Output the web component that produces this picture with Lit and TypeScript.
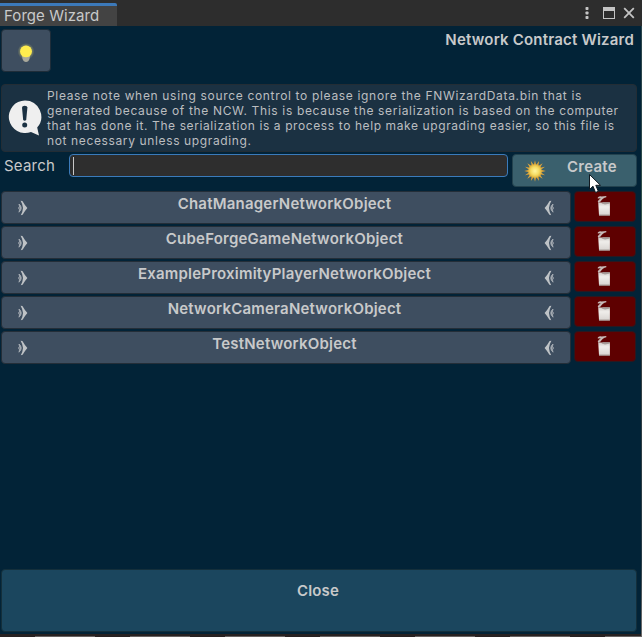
import { LitElement, html, css, svg } from "lit";
import { customElement, property } from "lit/decorators.js";

@customElement("wave-icon")
class WaveIcon extends LitElement {
  static styles = css`:host { display: block; width: 10px; height: 16px; } svg { display: block; }`;
  render() {
    return html`<svg width="10" height="16" viewBox="0 0 10 16">
      <path d="M2.600 .8 L4.400 1 Q6.600 5 9.400 7.900 Q6.600 11 4.600 14.800 L2.800 15.200 Q4.800 11.500 5 8 Q4.800 4.500 2.600 .8Z" fill="#bfc3c6"/>
      <path d="M1 4 Q5.400 8 1 12.200 Q3 8 1 4Z" fill="#a4abb2" stroke="#a4abb2" stroke-width="1"/>
      <path d="M0 6.800 L1.400 8 L0 9.500Z" fill="#9299a2"/>
    </svg>`;
  }
}

@customElement("contract-row")
class ContractRow extends LitElement {
  @property() name = "";
  static styles = css`
    :host { display: flex; gap: 3px; height: 33px; align-items: flex-start; }
    .main { box-sizing: border-box; width: 570px; height: 33px; border: 1px solid #242e38; border-radius: 4px;
      background: #3e4e60; display: grid; grid-template-columns: 10px 1fr 10px; padding: 0 16px; }
    .label { text-align: center; font: 600 15px/24px Inter, sans-serif; letter-spacing: .21px; padding-right: 3px; color: #c8c9ca; white-space: nowrap; }
    wave-icon { margin-top: 8px; }
    .right { transform: scaleX(-1); }
    .del { box-sizing: border-box; width: 62px; height: 31px; border: 1px solid #2a1820; border-radius: 4px;
      background: #5e0000; display: flex; justify-content: center; padding: 3px 3px 0 0; }
  `;
  render() {
    return html`
      <div class="main"><wave-icon></wave-icon><span class="label">${this.name}</span><wave-icon class="right"></wave-icon></div>
      <div class="del"><svg width="14" height="22" viewBox="0 0 14 22">
        <defs><linearGradient id="can" x1="0" x2="0" y1="0" y2="1"><stop offset="0" stop-color="#cfcac7"/><stop offset=".35" stop-color="#efedea"/><stop offset="1" stop-color="#d8d4d1"/></linearGradient></defs>
        <path d="M.8 2.400 Q2 1.200 4.500 1.400 L9.300 1.100 V2.300 Q5.500 3 3.600 6.500 L1.400 7.500 L.7 6.300 Q2.200 4.500 3.800 3.300 L.8 3.500Z" fill="#c6b9b7"/>
        <path d="M1.200 7.200 L4 7.600 H12.900 V20.300 H2Z" fill="url(#can)"/>
        <path d="M4.500 8.600 L8 9.600 L12.900 8.600 V7.200 H6Z" fill="#a59b98"/>
        <path d="M2 19.600 H12.900 V20.800 H2Z" fill="#a0938f"/>
      </svg></div>`;
  }
}

const ROWS = [
  "ChatManagerNetworkObject",
  "CubeForgeGameNetworkObject",
  "ExampleProximityPlayerNetworkObject",
  "NetworkCameraNetworkObject",
  "TestNetworkObject",
];

const NOTE = [
  { text: "Please note when using source control to please ignore the FNWizardData.bin that is", tracking: 0.67 },
  { text: "generated because of the NCW. This is because the serialization is based on the computer", tracking: 0.66 },
  { text: "that has done it. The serialization is a process to help make upgrading easier, so this file is", tracking: 0.6 },
  { text: "not necessary unless upgrading.", tracking: 0.63 },
];

const sunPoints = (outer: number, inner: number) =>
  Array.from({ length: 32 }, (_, i) => {
    const r = i % 2 ? inner : outer;
    const a = (i * Math.PI) / 16 - Math.PI / 2;
    return `${(11 + r * Math.cos(a)).toFixed(2)},${(11 + r * Math.sin(a)).toFixed(2)}`;
  }).join(" ");

@customElement("app-root")
class AppRoot extends LitElement {
  static styles = css`
    :host { display: flex; flex-direction: column; position: relative; width: 642px; height: 637px; box-sizing: border-box;
      overflow: hidden; background: #022337; color: #c8c9ca; font-family: Inter, sans-serif; }
    svg { display: block; }
    .bar { height: 26px; background: #2d2d2d; display: flex; justify-content: space-between; flex: none; }
    .tab { box-sizing: border-box; margin-top: 3px; width: 117px; height: 23px; background: #434343; border-top: 3px solid #3c79b9;
      border-top-right-radius: 2px; padding-left: 4px; font-size: 15px; line-height: 20px; letter-spacing: .06px; white-space: nowrap; }
    .head { height: 58px; flex: none; display: flex; justify-content: space-between; padding: 3px 8px 0 1px; box-sizing: border-box; }
    .bulb { box-sizing: border-box; width: 50px; height: 43px; background: #3e4e60; border: 1px solid #1f2d39; border-radius: 4px;
      display: flex; justify-content: center; padding: 13px 1px 0 0; }
    .title { font-weight: 600; font-size: 15px; line-height: 22px; letter-spacing: .2px; white-space: nowrap; }
    .note { box-sizing: border-box; margin-left: 1px; width: 636px; height: 68px; flex: none; display: flex; background: #1b3142;
      border: 1px solid #232d35; border-radius: 4px; padding: 3px 0 0 6px; }
    .note svg { margin-top: 12px; flex: none; }
    .lines { margin-left: 5px; font-size: 12px; line-height: 15px; color: #bbbec0; }
    .lines div { white-space: nowrap; }
    .search { height: 39px; flex: none; display: flex; align-items: flex-start; padding: 2px 0 0 4px; box-sizing: border-box; }
    .slabel { width: 65px; font-size: 15px; line-height: 24px; letter-spacing: .2px; }
    .field { box-sizing: border-box; width: 439px; height: 23px; border: 1px solid #3b7bbb; border-radius: 4px; background: #2e2e2e; padding: 2px 3px; }
    .caret { width: 1px; height: 18px; background: #c8c8c8; }
    .create { box-sizing: border-box; margin-left: 4px; width: 125px; height: 33px; border: 1px solid #23424e; border-radius: 4px;
      background: #3a606d; display: flex; padding: 4px 0 0 11px; }
    .create svg { margin-top: 1px; }
    .create span { font-weight: 600; font-size: 15px; line-height: 15px; letter-spacing: .25px; margin-left: 21px; }
    .rows { display: flex; flex-direction: column; gap: 2px; padding-left: 1px; }
    .close { box-sizing: border-box; margin: auto 0 5px 1px; width: 636px; height: 63px; border: 1px solid #142f3b; border-radius: 4px;
      background: #1b465e; text-align: center; font-weight: 600; font-size: 15px; line-height: 42px; letter-spacing: .2px; padding-right: 2px; flex: none; }
    .under { position: absolute; left: 0; right: 0; bottom: 0; height: 3px; background:
      linear-gradient(#282222, #282222) 0 0 / 100% 2px no-repeat,
      repeating-linear-gradient(90deg, #282222 0 35px, #686463 35px 95px); }
    .edge { position: absolute; right: 0; top: 0; width: 1px; height: 100%; background: linear-gradient(#2d2d2d 0 26px, #2b464b 26px 120px, #34544a 220px, #3b4141 260px, #263b46 560px, #686868 620px); }
    .cursor { position: absolute; left: 588px; top: 173px; }
  `;
  render() {
    return html`
      <div class="bar">
        <div class="tab">Forge Wizard</div>
        <svg width="62" height="26" viewBox="580 0 62 26">
          <g fill="#c4c4c4"><rect x="585.500" y="7" width="3" height="3" rx=".7"/><rect x="585.500" y="11.500" width="3" height="3" rx=".7"/><rect x="585.500" y="16" width="3" height="3" rx=".7"/>
          <path d="M603 7H615V19H603Z M604 11V18H614V11Z" fill-rule="evenodd"/></g>
          <path d="M624.200 8.200 L633.800 17.800 M633.800 8.200 L624.200 17.800" stroke="#c4c4c4" stroke-width="1.800"/>
        </svg>
      </div>
      <div class="head">
        <div class="bulb"><svg width="18" height="20" viewBox="0 0 18 20">
          <defs><radialGradient id="glow"><stop offset=".55" stop-color="#c5c26a" stop-opacity=".6"/><stop offset="1" stop-color="#c5c26a" stop-opacity="0"/></radialGradient></defs>
          <circle cx="9" cy="8.500" r="8.500" fill="url(#glow)"/>
          <path d="M5 12 H13 L12.500 16 Q11.500 19 9 19 Q6.500 19 5.500 16Z" fill="#aaa99b"/>
          <path d="M3 8.500 A6 6 0 0 1 15 8.500 Q15 11 12.500 13.500 Q9 15 5.500 13.500 Q3 11 3 8.500Z" fill="#ffed4e"/>
        </svg></div>
        <div class="title">Network Contract Wizard</div>
      </div>
      <div class="note">
        <svg width="34" height="36" viewBox="0 0 34 36">
          <path d="M17 0.500 A16.300 16.300 0 1 0 23 32 L31 35.500 L29.200 27.500 A16.300 16.300 0 0 0 17 .5Z" fill="#efefef"/>
          <path d="M14 7.500 Q14 5.800 16.700 5.800 Q19.400 5.800 19.400 7.500 L18.200 20 Q16.700 21.500 15.200 20Z" fill="#1b3142"/>
          <circle cx="16.700" cy="25" r="2.500" fill="#1b3142"/>
        </svg>
        <div class="lines">${NOTE.map((l) => html`<div style="letter-spacing:${l.tracking}px">${l.text}</div>`)}</div>
      </div>
      <div class="search">
        <div class="slabel">Search</div>
        <div class="field"><div class="caret"></div></div>
        <div class="create">
          <svg width="22" height="22" viewBox="0 0 22 22">
            <defs><radialGradient id="sun"><stop offset="0" stop-color="#fff6a0"/><stop offset=".6" stop-color="#f5dc63"/><stop offset="1" stop-color="#dcb03c"/></radialGradient></defs>
            ${svg`<polygon points=${sunPoints(10.8, 6)} fill="#dda43a"/>`}
            <circle cx="11" cy="11" r="6.800" fill="url(#sun)"/>
          </svg>
          <span>Create</span>
        </div>
      </div>
      <div class="rows">${ROWS.map((n) => html`<contract-row .name=${n}></contract-row>`)}</div>
      <div class="close">Close</div>
      <div class="under"></div>
      <div class="edge"></div>
      <svg class="cursor" width="14" height="21" viewBox="0 0 14 21">
        <path d="M1.500 1.500 V16.500 L5 13.200 L7.500 19.500 L10.300 18.300 L7.800 12.300 H12.500Z" fill="#fff" stroke="#101820" stroke-width="1"/>
      </svg>`;
  }
}
